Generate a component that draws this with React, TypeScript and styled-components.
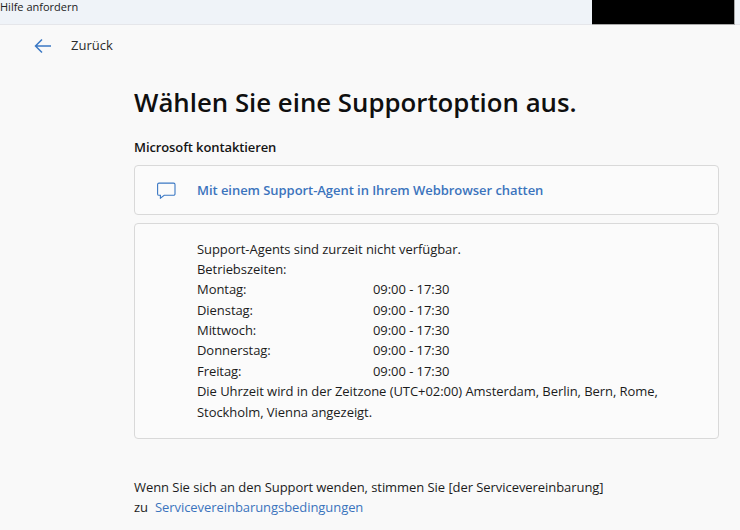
import React from "react";
import styled, { createGlobalStyle } from "styled-components";

const Global = createGlobalStyle`
  html, body { margin: 0; padding: 0; background: #f9f9f9; }
  body { font-family: "Open Sans", "Noto Sans", sans-serif; color: #1a1a1a; width: 740px; height: 530px; overflow: hidden; }
`;
const Page = styled.div`width: 740px; height: 530px; display: flex; flex-direction: column;`;
const TitleBar = styled.header`
  height: 24px; flex: none; display: flex; justify-content: space-between;
  background: #eff3f8; border-bottom: 1px solid #e5e6ea;
`;
const AppName = styled.span`font-size: 11px; line-height: 13px; color: #222;`;
const Redaction = styled.div`
  width: 143px; height: 25px; margin-right: 5px; background: #000; border: solid #a8a8a8; border-width: 0 1px 1px 0; box-sizing: border-box;
`;
const BackRow = styled.nav`
  height: 40px; flex: none; display: flex; align-items: center; gap: 19px; padding-left: 34px;
`;
const BackLabel = styled.span`font-size: 13px; color: #2b2b2b;`;
const Main = styled.main`
  padding-left: 134px; width: 585px; display: flex; flex-direction: column;
`;
const Title = styled.h1`
  margin: 15px 0 0; font-size: 25.8px; line-height: 44px; font-weight: 600; color: #0f0f0f; white-space: nowrap;
`;
const Section = styled.h2`
  margin: 13px 0 0; font-size: 13px; line-height: 20px; font-weight: 600; color: #151515; letter-spacing: -0.1px;
`;
const Card = styled.div`
  box-sizing: border-box; width: 585px; background: #fbfbfb; border: 1px solid #d9d9d9; border-radius: 4px;
`;
const ChatCard = styled(Card)`
  margin-top: 8px; height: 50px; display: flex; align-items: center; gap: 21px; padding-left: 22px;
`;
const ChatLabel = styled.span`font-size: 13px; font-weight: 600; color: #3b74bd; letter-spacing: -0.05px;`;
const InfoCard = styled(Card)`
  margin-top: 8px; height: 216px; padding: 14.6px 40px 0 62px; font-size: 13px; line-height: 20.37px; color: #1c1c1c; letter-spacing: -0.06px;
`;
const Line = styled.div`white-space: nowrap;`;
const HourRow = styled.div`display: grid; grid-template-columns: 176px 1fr;`;
const Footer = styled.p`
  margin: 39px 0 0; font-size: 13px; line-height: 19.5px; color: #1c1c1c; white-space: nowrap; letter-spacing: -0.06px;
`;
const TermsLink = styled.a`color: #3b74bd; margin-left: 7px; text-decoration: none;`;

const hours = ["Montag:", "Dienstag:", "Mittwoch:", "Donnerstag:", "Freitag:"];

export default function App() {
  return (
    <Page>
      <Global />
      <TitleBar>
        <AppName>Hilfe anfordern</AppName>
        <Redaction />
      </TitleBar>
      <BackRow>
        <svg width="18" height="18" viewBox="0 0 18 18" fill="none" stroke="#3b78c4" strokeWidth="1.5">
          <path d="M17 10H1.8M8 3.5L1.5 10 8 16.500" />
        </svg>
        <BackLabel>Zurück</BackLabel>
      </BackRow>
      <Main>
        <Title>Wählen Sie eine Supportoption aus.</Title>
        <Section>Microsoft kontaktieren</Section>
        <ChatCard>
          <svg width="19" height="17" viewBox="0 0 19 17" fill="none" stroke="#3b78c4" strokeWidth="1.1">
            <path d="M2 1.1h14.6a1.4 1.4 0 0 1 1.4 1.4v9.4a1.4 1.4 0 0 1-1.4 1.4H7.2L3.4 16.2v-2.900H2A1.4 1.4 0 0 1 .6 11.9V2.5A1.4 1.4 0 0 1 2 1.1z" />
          </svg>
          <ChatLabel>Mit einem Support-Agent in Ihrem Webbrowser chatten</ChatLabel>
        </ChatCard>
        <InfoCard>
          <Line>Support-Agents sind zurzeit nicht verfügbar.</Line>
          <Line>Betriebszeiten:</Line>
          {hours.map((d) => (
            <HourRow key={d}><span>{d}</span><span>09:00 - 17:30</span></HourRow>
          ))}
          <Line>Die Uhrzeit wird in der Zeitzone (UTC+02:00) Amsterdam, Berlin, Bern, Rome,</Line>
          <Line>Stockholm, Vienna angezeigt.</Line>
        </InfoCard>
        <Footer>
          Wenn Sie sich an den Support wenden, stimmen Sie [der Servicevereinbarung]
          <br />
          zu<TermsLink href="#">Servicevereinbarungsbedingungen</TermsLink>
        </Footer>
      </Main>
    </Page>
  );
}
